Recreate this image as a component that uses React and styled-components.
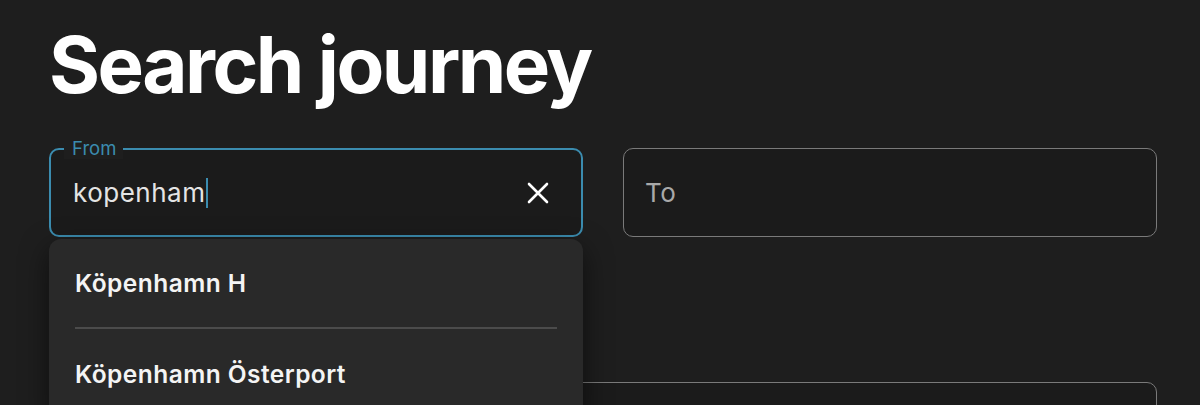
import React from 'react'
import styled, {createGlobalStyle} from 'styled-components'

const GlobalStyle = createGlobalStyle`
    html, body {
        margin: 0;
        padding: 0;
        background: #1e1e1e;
    }
    body {
        font-family: Inter, "Noto Sans", sans-serif;
        color: #fff;
        overflow: hidden;
    }
`

const Page = styled.main`
    width: 1108px;
    padding: 17px 0 0 49px;
`

const Title = styled.h1`
    margin: 0 0 35px;
    font-size: 78px;
    line-height: 96px;
    font-weight: 700;
    letter-spacing: -2.5px;
    color: #fff;
`

const Row = styled.div`
    display: grid;
    grid-template-columns: 1fr 1fr;
    column-gap: 40px;
`

const Field = styled.div`
    position: relative;
    box-sizing: border-box;
    height: 89px;
    display: flex;
    align-items: center;
    padding: 0 ${({$focused}) => ($focused ? '22px' : '21px')};
    border: ${({$focused}) => ($focused ? '2px solid #3b8caf' : '1.5px solid #7a7a7a')};
    border-radius: 10px;
    background: #1b1b1b;
`

const FloatLabel = styled.label`
    position: absolute;
    top: -13px;
    left: 13px;
    padding: 0 7px 0 8px;
    background: #1e1e1e;
    color: #3b8caf;
    font-size: 18.5px;
    line-height: 22px;
`

const Value = styled.span`
    flex: 1;
    display: flex;
    align-items: center;
    font-size: 26px;
    letter-spacing: 0.5px;
    color: ${({$placeholder}) => ($placeholder ? '#a9a9a9' : '#e4e4e4')};
`

const Caret = styled.span`
    display: inline-block;
    width: 2px;
    height: 30px;
    margin-left: 1px;
    background: #3b8caf;
`

const ClearButton = styled.button`
    display: flex;
    padding: 0;
    margin-right: 10px;
    border: 0;
    background: none;
    color: #fff;
    cursor: pointer;
`

const Dropdown = styled.ul`
    position: absolute;
    top: 89px;
    left: -2px;
    right: -2px;
    z-index: 2;
    margin: 0;
    padding: 0;
    list-style: none;
    background: #292929;
    border-radius: 12px;
    box-shadow: 0 10px 28px rgba(0, 0, 0, 0.55);
`

const Option = styled.li`
    height: 90px;
    display: flex;
    align-items: center;
    margin: 0 26px;
    font-size: 24.5px;
    font-weight: 600;
    letter-spacing: 0.45px;
    color: #f4f4f4;
    border-bottom: ${({$last}) => ($last ? 'none' : '2px solid #4b4b4b')};
    box-sizing: border-box;
`

const WideField = styled(Field)`
    margin-top: 145px;
`

const ClearIcon = () => (
    <svg width="22" height="22" viewBox="0 0 22 22" fill="none">
        <path d="M2 2L20 20M20 2L2 20" stroke="currentColor" strokeWidth="2.6" strokeLinecap="round" />
    </svg>
)

const suggestions = ['Köpenhamn H', 'Köpenhamn Österport']

export default function App() {
    return (
        <>
            <GlobalStyle />
            <Page>
                <Title>Search journey</Title>
                <Row>
                    <Field $focused>
                        <FloatLabel>From</FloatLabel>
                        <Value>
                            kopenham
                            <Caret />
                        </Value>
                        <ClearButton aria-label="Clear">
                            <ClearIcon />
                        </ClearButton>
                        <Dropdown>
                            {suggestions.map((s, i) => (
                                <Option key={s} $last={i === suggestions.length - 1}>
                                    {s}
                                </Option>
                            ))}
                        </Dropdown>
                    </Field>
                    <Field>
                        <Value $placeholder>To</Value>
                    </Field>
                </Row>
                <WideField />
            </Page>
        </>
    )
}
